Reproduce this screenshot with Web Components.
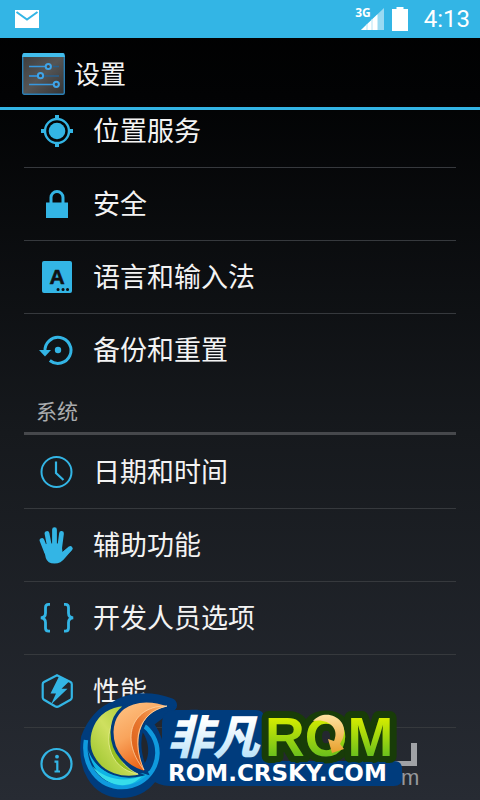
<!DOCTYPE html>
<html lang="zh-CN">
<head>
<meta charset="utf-8">
<meta name="viewport" content="width=device-width, initial-scale=1">
<title>设置</title>
<style>
    body {
        margin: 0;
        background: #000;
        font-family: "Noto Sans CJK SC", sans-serif;
    }
</style>
</head>
<body>
<settings-app>
    <status-bar slot="status" time="4:13"></status-bar>
    <action-bar slot="header">设置</action-bar>

    <settings-row icon="location">位置服务</settings-row>
    <settings-row icon="lock">安全</settings-row>
    <settings-row icon="language">语言和输入法</settings-row>
    <settings-row icon="backup" last>备份和重置</settings-row>
    <settings-category>系统</settings-category>
    <settings-row icon="clock">日期和时间</settings-row>
    <settings-row icon="hand">辅助功能</settings-row>
    <settings-row icon="braces">开发人员选项</settings-row>
    <settings-row icon="performance">性能</settings-row>
    <settings-row icon="info" last>关于手机</settings-row>

    <site-badge slot="badge"></site-badge>
</settings-app>

<script>
    // 36x36 icons, drawn with currentColor
    const ICONS = {
        location: `
            <circle cx="18" cy="18" r="8.300" fill="currentColor"/>
            <circle cx="18" cy="18" r="12" fill="none" stroke="currentColor" stroke-width="2.400"/>
            <path d="M18 2v5M18 29v5M2 18h5M29 18h5" stroke="currentColor" stroke-width="4"/>`,
        lock: `
            <path d="M7 16.500h22V32H7z" fill="currentColor"/>
            <path d="M12 18v-6.500a6 6 0 0 1 12 0V18" fill="none" stroke="currentColor" stroke-width="3"/>`,
        language: `
            <rect x="3" y="2" width="30" height="32" rx="2" fill="currentColor"/>
            <text x="18" y="25" text-anchor="middle" font-family="Liberation Sans, sans-serif" font-weight="700" font-size="21" fill="#101214" stroke="#101214" stroke-width=".6">A</text>
            <path d="M19 30.500h.1M24 30.500h.1M28.500 30.500h.1" stroke="#101214" stroke-width="3" stroke-linecap="round"/>`,
        backup: `
            <path d="M6 19.500A13 13 0 1 1 10.800 28.500" fill="none" stroke="currentColor" stroke-width="3"/>
            <path d="M0 18h12l-6 6.500z" fill="currentColor"/>
            <circle cx="19" cy="18" r="3.200" fill="currentColor"/>`,
        clock: `
            <circle cx="17.500" cy="18" r="15" fill="none" stroke="currentColor" stroke-width="2"/>
            <path d="M17 7.500V19l7.500 7" fill="none" stroke="currentColor" stroke-width="2.200"/>`,
        hand: `
            <g fill="none" stroke="currentColor" stroke-width="4.800" stroke-linecap="round">
                <path d="M3 13.500L7.500 25"/>
                <path d="M8 6.500L11 22"/>
                <path d="M15.500 2.700V22"/>
                <path d="M22.500 6.500L20.500 22"/>
                <path d="M31.300 21.500L25 27"/>
            </g>
            <path d="M4 18L9 16.500H22.500L23.500 25L30 19.500L32.500 23.500L26 31Q22 36.500 15.500 36.500Q8.500 36.500 6.800 31z" fill="currentColor"/>`,
        braces: `
            <path d="M11 4.300H9.500Q6.500 4.300 6.500 7.500V13Q6.500 17.500 1.800 17.800Q6.500 18.200 6.500 22.500V28Q6.500 31.200 9.500 31.200H11M25 4.300H26.500Q29.500 4.300 29.500 7.500V13Q29.500 17.500 34.200 17.800Q29.500 18.200 29.500 22.500V28Q29.500 31.200 26.500 31.200H25" fill="none" stroke="currentColor" stroke-width="2.800"/>`,
        performance: `
            <path d="M18 2.200L31.500 9Q32.800 9.800 32.800 11.200V24.500Q32.800 26 31.500 26.800L20 33.300Q18 34.300 16 33.300L5 26.800Q3.700 26 3.700 24.500V11.200Q3.700 9.800 5 9z" fill="none" stroke="currentColor" stroke-width="2.200" stroke-linejoin="round"/>
            <path d="M20 3.500L11.500 20.500H17L12 31.500L28.500 15.800H22.500L30 8.500z" fill="currentColor"/>`,
        info: `
            <circle cx="17.500" cy="18" r="15" fill="none" stroke="currentColor" stroke-width="2.200"/>
            <circle cx="18" cy="10.700" r="1.900" fill="currentColor"/>
            <path d="M15.500 15.700h2.800v10M15.500 25.500h5.500" fill="none" stroke="currentColor" stroke-width="2.200"/>`
    };

    class SettingsApp extends HTMLElement {
        constructor() {
            super();
            const shadow = this.attachShadow({ mode: 'open' });
            const template = document.createElement('template');
            template.innerHTML = `
                <style>
                    :host {
                        position: relative;
                        display: flex;
                        flex-direction: column;
                        height: 100vh;
                        overflow: hidden;
                        color: #f3f3f3;
                        background: linear-gradient(#000, #020304 12%, #16191d 54%, #272b33);
                    }
                    main {
                        flex: 1;
                        min-height: 0;
                        overflow: hidden;
                    }
                    /* the list is scrolled a little under the action bar */
                    .list {
                        margin: -15px 24px 0;
                    }
                </style>
                <slot name="status"></slot>
                <slot name="header"></slot>
                <main><div class="list" role="list"><slot></slot></div></main>
                <slot name="badge"></slot>
            `;
            shadow.appendChild(template.content.cloneNode(true));
        }
    }

    class StatusBar extends HTMLElement {
        constructor() {
            super();
            const shadow = this.attachShadow({ mode: 'open' });
            const template = document.createElement('template');
            template.innerHTML = `
                <style>
                    :host {
                        display: flex;
                        align-items: center;
                        height: 38px;
                        padding: 0 10px 0 15px;
                        background: #33b5e5;
                        color: #fff;
                        font-family: Roboto, sans-serif;
                    }
                    svg { display: block; }
                    .mail { margin-right: auto; }
                    .network {
                        align-self: flex-start;
                        margin-top: 5px;
                        font: 700 12px/16px "Noto Sans", sans-serif;
                    }
                    .signal { margin-left: -10px; }
                    .battery { margin: 0 16px 0 8px; }
                    time { font-size: 24px; line-height: 38px; }
                </style>
                <svg class="mail" width="24" height="20" viewBox="0 0 24 20">
                    <path d="M0 1h24v18H0z" fill="#fff"/>
                    <path d="M1.500 3L12 10.500L22.500 3" fill="none" stroke="#33b5e5" stroke-width="2"/>
                </svg>
                <span class="network">3G</span>
                <svg class="signal" width="23" height="22" viewBox="0 0 23 22">
                    <path d="M23 0V22H0z" fill="#99daf2"/>
                    <path d="M16.500 6.200V22H0z" fill="#fff"/>
                    <path d="M6 16v6M11 11v11" stroke="#b5e4f5" stroke-width="1"/>
                </svg>
                <svg class="battery" width="16" height="24" viewBox="0 0 16 24">
                    <path d="M4.500 0h7v2H16v22H0V2h4.500z" fill="#fff"/>
                </svg>
                <time></time>
            `;
            shadow.appendChild(template.content.cloneNode(true));
        }
        connectedCallback() {
            this.shadowRoot.querySelector('time').textContent = this.getAttribute('time');
        }
    }

    class ActionBar extends HTMLElement {
        constructor() {
            super();
            const shadow = this.attachShadow({ mode: 'open' });
            const template = document.createElement('template');
            template.innerHTML = `
                <style>
                    :host {
                        display: flex;
                        align-items: center;
                        gap: 9px;
                        padding: 3px 22px 0;
                        height: 66px;
                        border-bottom: 3px solid #33b5e5;
                    }
                    h1 {
                        margin: 0;
                        padding-bottom: 2px;
                        font-size: 26px;
                        font-weight: 400;
                        line-height: 40px;
                    }
                </style>
                <svg width="43" height="42" viewBox="0 0 43 42">
                    <defs>
                        <linearGradient id="face" x2="1" y2="1">
                            <stop stop-color="#3c3c3c"/><stop offset=".5" stop-color="#555"/><stop offset="1" stop-color="#333"/>
                        </linearGradient>
                    </defs>
                    <rect x=".7" y=".7" width="41.600" height="40.600" rx="1.500" fill="url(#face)" stroke="#2a7fb5" stroke-width="1.400"/>
                    <path d="M1.500 0h40l1.500 4H0z" fill="#42bdeb"/>
                    <path d="M31 13.500h6M7 23h8M22 23h15" stroke="#285f8c" stroke-width="1.600"/>
                    <path d="M7 13.500h16M7 23h8M7 31.500h24" stroke="#3798df" stroke-width="1.600"/>
                    <g fill="#444" stroke="#3fa4e8" stroke-width="2">
                        <circle cx="26.300" cy="13.500" r="2.600"/>
                        <circle cx="18.500" cy="22.700" r="2.600"/>
                        <circle cx="34.300" cy="31.300" r="2.600"/>
                    </g>
                </svg>
                <h1><slot></slot></h1>
            `;
            shadow.appendChild(template.content.cloneNode(true));
        }
    }

    class SettingsRow extends HTMLElement {
        constructor() {
            super();
            const shadow = this.attachShadow({ mode: 'open' });
            const template = document.createElement('template');
            template.innerHTML = `
                <style>
                    :host {
                        display: block;
                        border-bottom: 1px solid #36393d;
                    }
                    :host([last]) { border-bottom: 0; }
                    a {
                        display: flex;
                        align-items: center;
                        gap: 18px;
                        height: 72px;
                        padding-left: 15px;
                        color: inherit;
                        text-decoration: none;
                        font-size: 27px;
                        line-height: 40px;
                    }
                    svg {
                        flex: none;
                        overflow: visible;
                        color: #33b5e5;
                    }
                    span { padding-bottom: 2px; }
                </style>
                <a href="#"><svg width="36" height="36" viewBox="0 0 36 36" aria-hidden="true"></svg><span><slot></slot></span></a>
            `;
            shadow.appendChild(template.content.cloneNode(true));
        }
        connectedCallback() {
            this.setAttribute('role', 'listitem');
            this.shadowRoot.querySelector('svg').innerHTML = ICONS[this.getAttribute('icon')];
        }
    }

    class SettingsCategory extends HTMLElement {
        constructor() {
            super();
            const shadow = this.attachShadow({ mode: 'open' });
            const template = document.createElement('template');
            template.innerHTML = `
                <style>
                    :host {
                        display: block;
                        margin-bottom: 1px;
                        border-bottom: 3px solid #46484c;
                    }
                    h2 {
                        margin: 0;
                        padding: 9px 12px 7px;
                        color: #a9abad;
                        font-size: 21px;
                        font-weight: 400;
                        line-height: 30px;
                    }
                </style>
                <h2><slot></slot></h2>
            `;
            shadow.appendChild(template.content.cloneNode(true));
        }
    }

    // Site logo floating over the end of the list
    class SiteBadge extends HTMLElement {
        constructor() {
            super();
            const shadow = this.attachShadow({ mode: 'open' });
            const template = document.createElement('template');
            template.innerHTML = `
                <style>
                    :host {
                        position: absolute;
                        left: 75px;
                        bottom: 0;
                        pointer-events: none;
                    }
                    svg { display: block; }
                    .cjk { font: italic 900 46px "Noto Sans CJK SC", sans-serif; }
                    .rom { font: 700 55px "Liberation Sans", sans-serif; }
                    .url { font: 700 23px "DejaVu Sans", sans-serif; }
                    .mark { font: 400 22px "Liberation Sans", sans-serif; }
                </style>
                <svg width="350" height="110" viewBox="75 690 350 110">
                    <defs>
                        <linearGradient id="ice" x2="0" y2="1">
                            <stop offset=".3" stop-color="#fff"/><stop offset="1" stop-color="#a9dcf8"/>
                        </linearGradient>
                        <linearGradient id="lime" x2="0" y2="1">
                            <stop offset=".2" stop-color="#d4ec00"/><stop offset=".8" stop-color="#6cc01c"/>
                        </linearGradient>
                        <linearGradient id="leaf" x1="1" x2="0" y2="1">
                            <stop stop-color="#9cc424"/><stop offset=".5" stop-color="#cfe060"/><stop offset="1" stop-color="#8fbe20"/>
                        </linearGradient>
                        <linearGradient id="flame" x2=".5" y2="1">
                            <stop stop-color="#ffc88a"/><stop offset=".5" stop-color="#f9a45c"/><stop offset="1" stop-color="#e8590c"/>
                        </linearGradient>
                        <linearGradient id="ember" x1="1" x2="0" y2="1">
                            <stop stop-color="#ffb66c"/><stop offset=".5" stop-color="#e87830"/><stop offset="1" stop-color="#d9560e"/>
                        </linearGradient>
                        <linearGradient id="gold" x2="0" y2="1">
                            <stop stop-color="#ffe2a0"/><stop offset="1" stop-color="#e8a02c"/>
                        </linearGradient>
                    </defs>

                    <path d="M411 743h6v23h-24v-5h18z" fill="#a0a2a6"/>
                    <text class="mark" x="401" y="785" fill="#96989c">m</text>

                    <path d="M88 738C84 767 96 790 121 791C146 791 161 769 157 748C155 738 150 729 145 724C151 717 160 712 170 705C146 696 126 701 116 708C104 711 93 724 88 738z" fill="#003c7d" stroke="#003c7d" stroke-width="14" stroke-linejoin="round"/>
                    <path d="M141 730C150 741 150 757 144 764L138 751z" fill="#22262d"/>
                    <path d="M158 761h236q8 0 8 8v9q0 8-8 8H170q-12 0-20-8z" fill="#003c7d"/>
                    <path d="M176 710h80q8 0 8 8v48h-102v-42q0-14 14-14z" fill="#003c7d"/>

                    <path d="M86 740C82 766 99 787 122 787C149 787 166 759 153 736Q149 729 143 725" fill="none" stroke="#0f9ade" stroke-width="4.500"/>
                    <path d="M88 750C98 776 123 781 150 771C135 793 98 793 88 750z" fill="#0fb4e4"/>
                    <path d="M92 766C104 779 124 783 142 776C128 792 104 786 92 766z" fill="#36dcea"/>
                    <path d="M124 705C92 708 84 739 93 756C102 774 123 780 142 775C118 768 105 735 124 705z" fill="url(#leaf)" stroke="#003c7d" stroke-width="2"/>
                    <path d="M121 709C99 734 108 769 138 774C117 765 106 737 121 709z" fill="#97c022" stroke="#f0f4a4" stroke-width=".7"/>
                    <path d="M172 707C147 695 113 700 112 732C112 753 126 768 147 773C134 744 137 712 172 707z" fill="url(#flame)" stroke="#003c7d" stroke-width="3"/>
                    <path d="M167 706C134 705 118 737 144 770C132 743 136 713 167 706z" fill="url(#ember)" stroke="#ffdcb0" stroke-width=".7"/>

                    <text class="cjk" x="167" y="754" fill="url(#ice)" stroke="#003c7d" stroke-width="10" stroke-linejoin="round" paint-order="stroke">非凡</text>
                    <text class="rom" x="265" y="756" fill="url(#lime)" stroke="#183c08" stroke-width="14" stroke-linejoin="round" paint-order="stroke">ROM</text>
                    <path d="M313 721C325 707 350 718 343 738L340 744L344 749L332 753L328 739L334 741C340 728 328 718 313 721z" fill="url(#gold)"/>
                    <text class="url" x="168" y="781" fill="#fff" stroke="#003c7d" stroke-width="4" stroke-linejoin="round" paint-order="stroke">ROM.CRSKY.COM</text>
                </svg>
            `;
            shadow.appendChild(template.content.cloneNode(true));
        }
    }

    customElements.define('settings-app', SettingsApp);
    customElements.define('status-bar', StatusBar);
    customElements.define('action-bar', ActionBar);
    customElements.define('settings-row', SettingsRow);
    customElements.define('settings-category', SettingsCategory);
    customElements.define('site-badge', SiteBadge);
</script>
</body>
</html>
